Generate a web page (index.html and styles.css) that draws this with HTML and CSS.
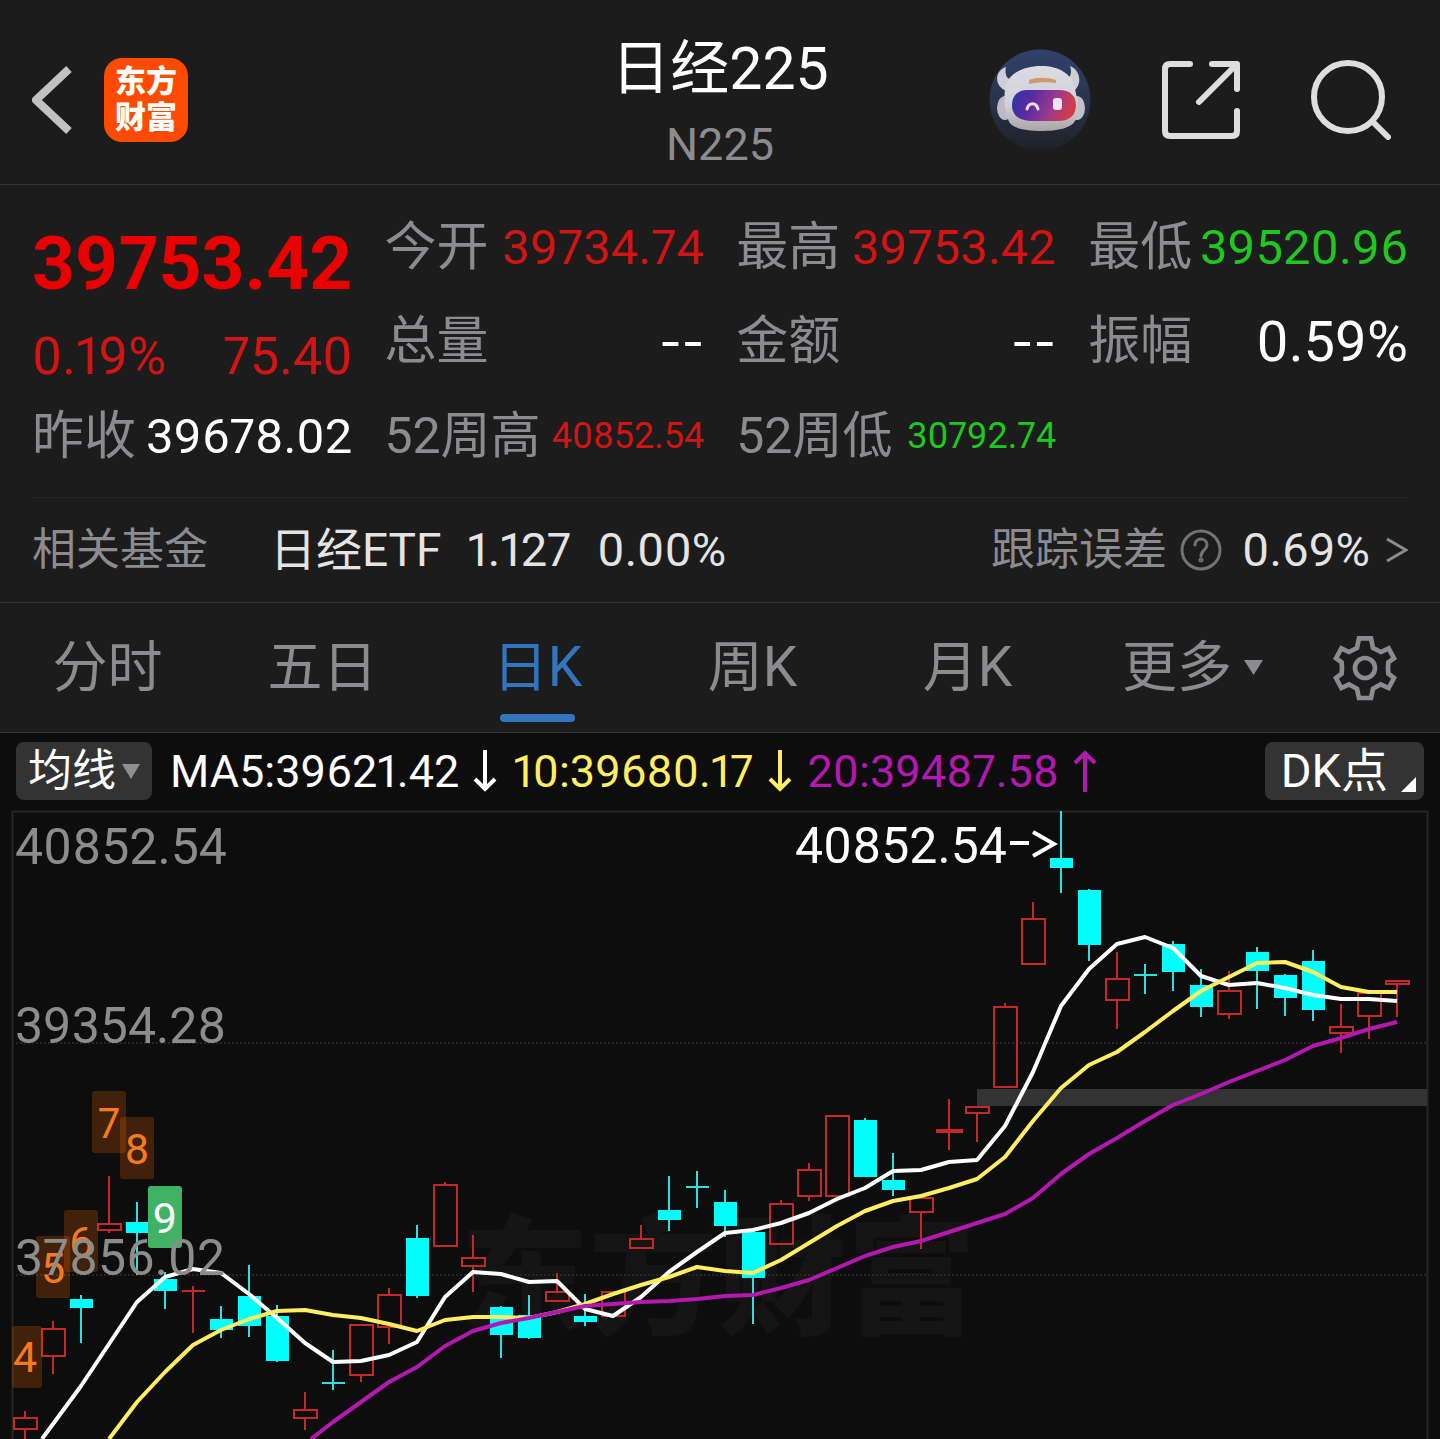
FILE: index.html
```html
<!DOCTYPE html>
<html lang="zh-CN">
<head>
<meta charset="utf-8">
<meta name="viewport" content="width=device-width, initial-scale=1">
<title>日经225 N225</title>
<link rel="stylesheet" href="styles.css">
</head>
<body>
<header class="topbar">
  <div class="topbar-left">
    <button class="icon-button" type="button" aria-label="返回">
      <svg width="40" height="68" viewBox="0 0 40 68" fill="none" stroke="#c2c2c2" stroke-width="8" stroke-linejoin="round"><path d="M37 3 4 34l33 31"/></svg>
    </button>
    <a class="brand" href="#"><span>东方</span><span>财富</span></a>
  </div>
  <div class="heading">
    <h1 class="title">日经225</h1>
    <p class="code">N225</p>
  </div>
  <div class="topbar-right">
    <button class="icon-button" type="button" aria-label="智能助手">
      <svg width="102" height="102" viewBox="0 0 102 102">
        <defs>
          <linearGradient id="sky" x1="0" y1="0" x2="0" y2="1"><stop offset="0" stop-color="#30426b"/><stop offset=".55" stop-color="#28324a"/><stop offset="1" stop-color="#1d2026"/></linearGradient>
          <linearGradient id="visor" x1="0" y1="0" x2="1" y2=".2"><stop offset="0" stop-color="#2b35a8"/><stop offset=".35" stop-color="#5a2ba0"/><stop offset=".7" stop-color="#9c3a8c"/><stop offset="1" stop-color="#d23c4c"/></linearGradient>
          <linearGradient id="fur" x1="0" y1="0" x2="0" y2="1"><stop offset="0" stop-color="#dcdbe2"/><stop offset=".6" stop-color="#d2d0d9"/><stop offset="1" stop-color="#a9a5a8"/></linearGradient>
        </defs>
        <circle cx="51" cy="51" r="50.500" fill="url(#sky)"/>
        <path d="M17 18C5 22 5 38 18 42l10-10c-9 0-13-5-11-14ZM81 17c11 4 13 20 2 26L72 32c8 0 12-7 9-15Z" fill="#cfced8"/>
        <ellipse cx="16" cy="59" rx="8" ry="12" fill="#bcbac4"/>
        <ellipse cx="88" cy="59" rx="8" ry="12" fill="#c2c0ca"/>
        <path d="M16 40C18 25 34 17 52 17s32 8 34 23c2 8 4 19 1 30-3 9-18 12-35 12s-31-3-33-12c-4-10-4-21-3-30Z" fill="url(#fur)"/>
        <path d="M38 41h32c11 0 17 6 17 15 0 10-6 16-18 16H42c-12 0-19-6-19-16 0-9 6-15 15-15Z" fill="url(#visor)"/>
        <path d="M40 31c8-3 18-3 27 0v3c-9-1-18-1-27 1Z" fill="#cf9a6c"/>
        <path d="M38 60c2-7 9-7 11 0" fill="none" stroke="#e6dcf4" stroke-width="3" stroke-linecap="round"/>
        <rect x="64" y="49" width="9" height="12" rx="3" fill="#f0e6f4"/>
      </svg>
    </button>
    <button class="icon-button" type="button" aria-label="分享">
      <svg width="78" height="78" viewBox="0 0 78 78" fill="none" stroke="#dedede" stroke-width="6" stroke-linecap="round" stroke-linejoin="round"><path d="M28 3H8Q3 3 3 8v62q0 5 5 5h62q5 0 5-5V50M50 3h25v25M73 5 37 41"/></svg>
    </button>
    <button class="icon-button" type="button" aria-label="搜索">
      <svg width="80" height="80" viewBox="0 0 80 80" fill="none" stroke="#dedede" stroke-width="6" stroke-linecap="round"><circle cx="37" cy="37" r="34"/><path d="m62 62 15 15"/></svg>
    </button>
  </div>
</header>

<main>
  <section class="quote">
    <div class="quote-main">
      <p class="price">39753.42</p>
      <p class="change"><span>0.19%</span><span>75.40</span></p>
      <dl class="stats"><div class="stat prev"><dt>昨收</dt><dd class="flat">39678.02</dd></div></dl>
    </div>
    <dl class="stats">
      <div class="stat"><dt>今开</dt><dd class="up">39734.74</dd></div>
      <div class="stat"><dt>总量</dt><dd class="flat none">--</dd></div>
      <div class="stat year"><dt>52周高</dt><dd class="up">40852.54</dd></div>
    </dl>
    <dl class="stats">
      <div class="stat"><dt>最高</dt><dd class="up">39753.42</dd></div>
      <div class="stat"><dt>金额</dt><dd class="flat none">--</dd></div>
      <div class="stat year"><dt>52周低</dt><dd class="down">30792.74</dd></div>
    </dl>
    <dl class="stats">
      <div class="stat"><dt>最低</dt><dd class="down">39520.96</dd></div>
      <div class="stat amplitude"><dt>振幅</dt><dd class="flat">0.59%</dd></div>
    </dl>
  </section>

  <section class="fund">
    <div class="fund-row">
      <span class="fund-label">相关基金</span>
      <a class="fund-link" href="#"><span>日经ETF</span><span class="num">1.127</span><span class="num">0.00%</span></a>
      <span class="fund-label">跟踪误差</span>
      <button class="icon-button help" type="button" aria-label="说明">
        <svg width="42" height="42" viewBox="0 0 42 42" fill="none" stroke="#737373" stroke-width="3" stroke-linecap="round"><circle cx="21" cy="21" r="19"/><path d="M15 16c0-8 12-8 12 0 0 5-6 5-6 11"/><circle cx="21" cy="31" r="1"/></svg>
      </button>
      <a class="fund-error" href="#"><span class="num">0.69%</span>
        <svg width="22" height="28" viewBox="0 0 22 28" fill="none" stroke="#8c8c90" stroke-width="3"><path d="m1 3 19 11L1 25"/></svg>
      </a>
    </div>
  </section>

  <nav class="tabs">
    <button class="tab" type="button">分时</button>
    <button class="tab" type="button">五日</button>
    <button class="tab active" type="button">日K</button>
    <button class="tab" type="button">周K</button>
    <button class="tab" type="button">月K</button>
    <button class="tab more" type="button">更多<svg width="19" height="15" viewBox="0 0 19 15" fill="#8c8b90"><path d="M0 0h19L9.500 15Z"/></svg></button>
    <button class="tab" type="button" aria-label="设置">
      <svg width="66" height="66" viewBox="317 28 198 198" fill="none" stroke="#8c8b90" stroke-width="14"><path d="M398 38H434L440 67 464 79 487 68 503 98 486 110Q484 127 486 144L503 157 487 187 463 176 440 189 434 217H398L392 189 368 176 345 187 329 157 346 144Q348 127 346 110L329 98 345 68 368 79 392 67Z"/><circle cx="416" cy="127" r="30"/></svg>
    </button>
  </nav>

  <section class="chart">
    <div class="legend">
      <button class="chip" type="button">均线<svg width="18" height="15" viewBox="0 0 18 15" fill="#8e8e8e"><path d="M0 0h18L9 15Z"/></svg></button>
      <span class="ma ma5">MA5:39621.42<svg width="26" height="42" viewBox="0 0 26 42"><path d="M13 0v39M3 29l10 10 10-10"/></svg></span>
      <span class="ma ma10">10:39680.17<svg width="26" height="42" viewBox="0 0 26 42"><path d="M13 0v39M3 29l10 10 10-10"/></svg></span>
      <span class="ma ma20">20:39487.58<svg width="26" height="42" viewBox="0 0 26 42"><path d="M13 42V3M3 13 13 3l10 10"/></svg></span>
      <button class="chip dk" type="button">DK点<svg width="15" height="15" viewBox="0 0 15 15" fill="#fff"><path d="M15 0v15H0Z"/></svg></button>
    </div>
    <svg class="plot" viewBox="0 810 1440 629" role="img" aria-label="日K线图">
      <text class="watermark" x="460" y="1325">东方财富</text>
      <path class="frame" d="M12.500 1439V811.500H1427.500V1439"/>
      <path class="grid" d="M12 1043H1427M12 1275H1427"/>
      <rect x="977" y="1089" width="450" height="17" fill="#333"/>

      <path class="wick rise" d="M25 1411v7M25 1429v10M53 1321v8M53 1356v18M109 1176v48M109 1230v3M193 1286v47M305 1392v18M305 1418v12M361 1375v7M389 1288v7M389 1327v17M445 1182v3M473 1235v23M473 1266v26M557 1273v19M641 1225v14M781 1200v4M809 1163v7M809 1196v5M921 1212v37M949 1099v51M977 1113v29M1005 1003v4M1033 902v17M1117 952v27M1117 1000v29M1229 971v20M1229 1014v5M1341 1004v23M1341 1033v20M1369 1016v23M1397 984v33"/>
      <path class="wick rise" d="M14 1418h23v11h-23ZM42 1329h23v27h-23ZM98 1224h23v6h-23ZM182 1291h23M294 1410h23v8h-23ZM350 1325h23v50h-23ZM378 1295h23v32h-23ZM434 1185h23v61h-23ZM462 1258h23v8h-23ZM546 1292h23v9h-23ZM602 1292h23v24h-23ZM630 1239h23v9h-23ZM770 1204h23v40h-23ZM798 1170h23v26h-23ZM826 1116h23v80h-23ZM910 1198h23v14h-23ZM937 1130h25v2h-25ZM966 1107h23v6h-23ZM994 1007h23v80h-23ZM1022 919h23v45h-23ZM1106 979h23v21h-23ZM1218 991h23v23h-23ZM1330 1027h23v6h-23ZM1358 993h23v23h-23ZM1386 981h23v3h-23Z"/>
      <path class="wick fall" d="M81 1295v48M137 1202v73M165 1272v37M221 1306v32M249 1265v72M277 1305v57M333 1350v40M322 1383h23M417 1225v73M501 1306v52M529 1295v44M585 1294v32M669 1176v55M697 1171v37M686 1187h23M725 1190v47M753 1232v92M865 1118v10M893 1153v43M1061 811v82M1089 889v72M1145 964v30M1134 975h23M1173 941v50M1201 969v48M1257 947v62M1285 974v42M1313 950v71"/>
      <path class="body fall" d="M70 1299h23v9h-23ZM126 1222h23v11h-23ZM154 1279h23v12h-23ZM210 1319h23v11h-23ZM238 1296h23v30h-23ZM266 1316h23v45h-23ZM406 1238h23v58h-23ZM490 1307h23v28h-23ZM518 1315h23v23h-23ZM574 1316h23v6h-23ZM658 1210h23v10h-23ZM714 1202h23v24h-23ZM742 1232h23v46h-23ZM854 1120h23v57h-23ZM882 1180h23v10h-23ZM1050 858h23v10h-23ZM1078 890h23v55h-23ZM1162 944h23v28h-23ZM1190 985h23v22h-23ZM1246 952h23v19h-23ZM1274 975h23v23h-23ZM1302 961h23v49h-23Z"/>

      <polyline class="line ma5" points="42,1439 53,1424 81,1386 109,1344 137,1302 165,1277 193,1269 221,1273 249,1294 277,1318 305,1343 333,1362 361,1361 389,1355 417,1342 445,1297 473,1272 501,1274 529,1282 557,1281 585,1309 613,1316 641,1297 669,1272 697,1252 725,1233 753,1230 781,1223 809,1213 837,1199 865,1188 893,1171 921,1170 949,1162 977,1160 1005,1126 1033,1072 1061,1006 1089,969 1117,944 1145,937 1173,948 1201,976 1229,985 1257,983 1285,988 1313,995 1341,999 1369,999 1397,1001"/>
      <polyline class="line ma10" points="109,1439 137,1402 165,1372 193,1345 221,1330 249,1319 277,1311 305,1310 333,1315 361,1318 389,1324 417,1331 445,1320 473,1317 501,1317 529,1318 557,1312 585,1304 613,1294 641,1285 669,1277 697,1267 725,1271 753,1273 781,1260 809,1243 837,1226 865,1211 893,1201 921,1196 949,1188 977,1179 1005,1157 1033,1121 1061,1088 1089,1065 1117,1052 1145,1032 1173,1011 1201,991 1229,977 1257,963 1285,962 1313,972 1341,987 1369,992 1397,992"/>
      <polyline class="line ma20" points="311,1439 333,1422 361,1402 389,1382 417,1367 445,1346 473,1331 501,1323 529,1318 557,1312 585,1306 613,1304 641,1302 669,1301 697,1299 725,1296 753,1295 781,1288 809,1280 837,1268 865,1256 893,1247 921,1241 949,1232 977,1223 1005,1214 1033,1198 1061,1174 1089,1154 1117,1138 1145,1121 1173,1105 1201,1094 1229,1082 1257,1071 1285,1060 1313,1046 1341,1038 1369,1029 1397,1022"/>

      <g class="count">
        <rect x="12" y="1326" width="30" height="62" rx="3"/><text x="25" y="1372">4</text>
        <rect x="36" y="1236" width="34" height="62" rx="3"/><text x="53" y="1283">5</text>
        <rect x="64" y="1210" width="34" height="62" rx="3"/><text x="81" y="1257">6</text>
        <rect x="92" y="1091" width="34" height="62" rx="3"/><text x="109" y="1138">7</text>
        <rect x="120" y="1117" width="34" height="62" rx="3"/><text x="137" y="1164">8</text>
        <rect class="nine" x="148" y="1186" width="34" height="62" rx="3"/><text class="nine-text" x="165" y="1233">9</text>
      </g>

      <text class="axis" x="15" y="864">40852.54</text>
      <text class="axis" x="15" y="1043">39354.28</text>
      <text class="axis" x="15" y="1275">37856.02</text>
      <text class="peak" x="795" y="863">40852.54</text>
      <path class="peak-arrow" d="M1010 843h19M1033 832l21 12-21 12"/>
    </svg>
  </section>
</main>
</body>
</html>
```
FILE: styles.css
```css
* {
  box-sizing: border-box;
}

body {
  margin: 0;
  background: #0d0d0d;
  color: #fff;
  font-family: Roboto, "Noto Sans CJK SC", sans-serif;
  font-variant-numeric: proportional-nums;
}

h1, p, dl, dd {
  margin: 0;
}

button {
  padding: 0;
  border: 0;
  background: none;
  color: inherit;
  font: inherit;
  cursor: pointer;
}

a {
  color: inherit;
  text-decoration: none;
}

svg {
  display: block;
  flex: none;
}

/* Top bar */
.topbar {
  display: grid;
  grid-template-columns: 1fr auto 1fr;
  align-items: center;
  padding: 24px 32px 8px;
  background: #1c1c1c;
  border-bottom: 1px solid #333;
}

.topbar-left {
  display: flex;
  align-items: center;
  gap: 32px;
}

.brand {
  display: flex;
  flex-direction: column;
  align-items: center;
  justify-content: center;
  width: 84px;
  height: 84px;
  border-radius: 18px;
  background: #ff4b00;
  font-size: 31px;
  font-weight: 900;
  line-height: 36px;
}

.heading {
  text-align: center;
}

.title {
  font-size: 59px;
  font-weight: 400;
  line-height: 90px;
}

.code {
  color: #8c8b90;
  font-size: 45px;
  line-height: 62px;
}

.topbar-right {
  display: flex;
  align-items: center;
  justify-content: flex-end;
  gap: 71px;
  padding-right: 17px;
}

/* Quote */
.quote {
  display: grid;
  grid-template-columns: repeat(4, 1fr);
  gap: 32px;
  padding: 16px 32px 14px;
  background: #1c1c1c;
}

.quote-main {
  padding-top: 15px;
}

.price {
  color: #eb0000;
  font-size: 75px;
  font-weight: 700;
  line-height: 94px;
}

.change {
  display: flex;
  justify-content: space-between;
  color: #d21414;
  font-size: 52px;
  line-height: 94px;
}

.stat {
  display: flex;
  align-items: center;
  justify-content: space-between;
  line-height: 94px;
  white-space: nowrap;
}

.stat dt {
  color: #8c8b90;
  font-size: 52px;
}

.stat dd {
  font-size: 49px;
}

.stat .none {
  font-family: Inter, sans-serif;
}

.prev {
  line-height: 66px;
}

.year dt {
  font-size: 50px;
}

.year dd {
  font-size: 36px;
}

.amplitude dd {
  font-size: 56px;
}

.up {
  color: #d21414;
}

.down {
  color: #1ec81e;
}

.flat {
  color: #fff;
}

/* Related fund */
.fund {
  padding: 0 32px;
  background: #1c1c1c;
  border-bottom: 1px solid #333;
}

.fund-row {
  display: flex;
  align-items: center;
  border-top: 1px solid #242424;
  color: #e4e4e4;
  font-size: 46px;
  line-height: 104px;
  white-space: nowrap;
}

.fund-label {
  color: #8c8b90;
  font-size: 44px;
}

.fund-link {
  display: flex;
  flex: 1;
  gap: 26px;
  margin-left: 62px;
}

.num {
  font-size: 47px;
}

.help {
  margin: 0 20px 0 13px;
}

.fund-error {
  display: flex;
  align-items: center;
  gap: 16px;
}

/* Period tabs */
.tabs {
  display: grid;
  grid-template-columns: repeat(6, 43fr) 30fr;
  background: #1c1c1c;
  border-bottom: 1px solid #333;
}

.tab {
  display: flex;
  align-items: center;
  justify-content: center;
  position: relative;
  color: #8c8b90;
  font-size: 55px;
  line-height: 129px;
}

.active {
  color: #3274bd;
}

.active::after {
  content: "";
  position: absolute;
  bottom: 10px;
  left: calc(50% - 38px);
  width: 75px;
  height: 8px;
  border-radius: 4px;
  background: #3274bd;
}

.more {
  gap: 12px;
  padding-left: 20px;
}

/* Chart */
.legend {
  display: flex;
  align-items: center;
  padding: 9px 16px 10px;
  white-space: nowrap;
}

.chip {
  display: flex;
  align-items: center;
  gap: 6px;
  margin-right: 18px;
  padding: 0 12px;
  border-radius: 8px;
  background: #333;
  font-size: 44px;
  line-height: 58px;
}

.ma {
  display: flex;
  align-items: center;
  gap: 13px;
  margin-right: 15px;
  font-size: 45px;
}

.ma svg {
  fill: none;
  stroke: currentColor;
  stroke-width: 4;
}

.ma5 {
  color: #fff;
  stroke: #fff;
}

.ma10 {
  color: #ffee62;
  stroke: #ffee62;
}

.ma20 {
  color: #b418b0;
  stroke: #b418b0;
}

.dk {
  align-items: flex-end;
  gap: 13px;
  margin-right: 0;
  margin-left: auto;
  padding: 0 8px 0 16px;
  font-size: 47px;
}

.dk svg {
  margin-bottom: 8px;
}

.plot {
  width: 100%;
  height: auto;
}

.watermark {
  fill: #141414;
  font-size: 129px;
  font-weight: 900;
}

.frame {
  fill: none;
  stroke: #262626;
  stroke-width: 2;
}

.grid {
  stroke: #262626;
  stroke-width: 2;
  stroke-dasharray: 2 2;
}

.wick {
  fill: none;
  stroke-width: 2;
}

.wick.rise {
  stroke: #c42828;
}

.wick.fall {
  stroke: #2fdede;
}

.body.fall {
  fill: #00ffff;
}

.line {
  fill: none;
  stroke-width: 4;
  stroke-linejoin: round;
}

.count rect {
  fill: #ff6a00;
  fill-opacity: .22;
}

.count text {
  fill: #f47a20;
  font-size: 43px;
  text-anchor: middle;
}

.count .nine {
  fill: #40b266;
  fill-opacity: 1;
}

.count .nine-text {
  fill: #fff;
}

.axis {
  fill: #8c8c8c;
  font-size: 50px;
}

.peak {
  fill: #fff;
  font-size: 50px;
}

.peak-arrow {
  fill: none;
  stroke: #fff;
  stroke-width: 4;
}
```
